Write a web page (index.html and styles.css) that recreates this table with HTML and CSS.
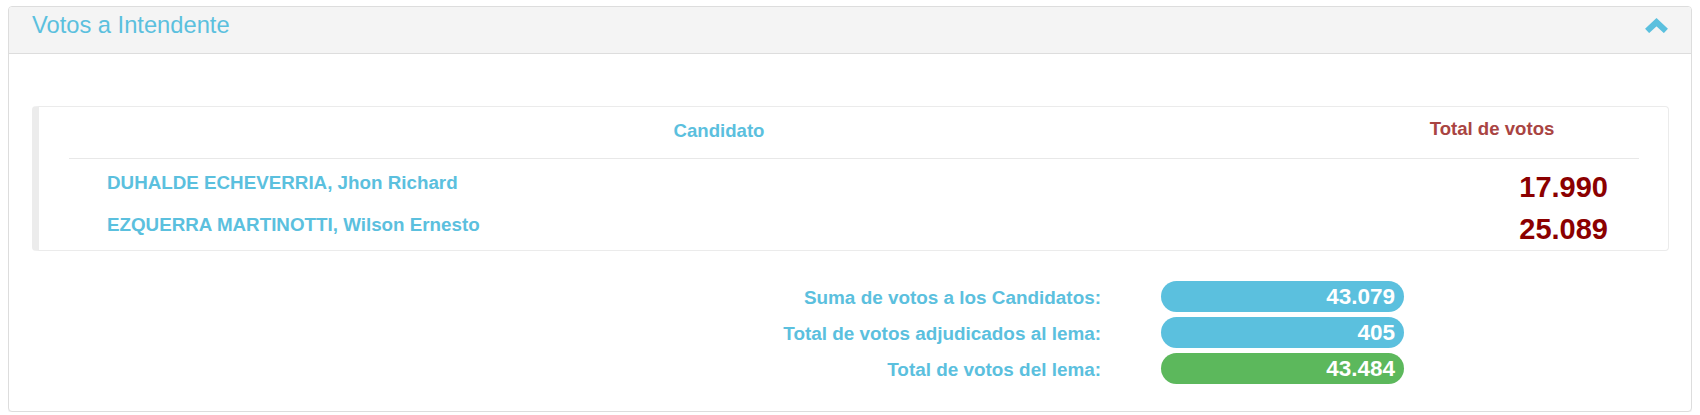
FILE: index.html
```html
<!DOCTYPE html>
<html lang="es">
<head>
<meta charset="utf-8">
<title>Votos a Intendente</title>
<link rel="stylesheet" href="styles.css">
</head>
<body>
<div class="panel">
  <div class="panel-heading">
    <h3 class="panel-title">Votos a Intendente</h3>
    <svg class="chevron" width="24" height="16" viewBox="0 0 24 16" aria-hidden="true">
      <polyline points="3.1,13.9 12.5,5.2 21.9,13.9" fill="none" stroke="#5bc0de" stroke-width="6" stroke-linecap="butt" stroke-linejoin="miter"/>
    </svg>
  </div>
  <div class="panel-body">
    <div class="callout">
      <div class="results">
        <div class="results-head">
          <div class="th th-name">Candidato</div>
          <div class="th th-votes">Total de votos</div>
        </div>
        <div class="results-body">
          <div class="row">
            <div class="name">DUHALDE ECHEVERRIA, Jhon Richard</div>
            <div class="votes">17.990</div>
          </div>
          <div class="row">
            <div class="name">EZQUERRA MARTINOTTI, Wilson Ernesto</div>
            <div class="votes">25.089</div>
          </div>
        </div>
      </div>
    </div>
    <div class="summary">
      <div class="label">Suma de votos a los Candidatos:</div>
      <div class="pill pill-info">43.079</div>
      <div class="label">Total de votos adjudicados al lema:</div>
      <div class="pill pill-info">405</div>
      <div class="label">Total de votos del lema:</div>
      <div class="pill pill-success">43.484</div>
    </div>
  </div>
</div>
</body>
</html>
```
FILE: styles.css
```css
* { box-sizing: border-box; }

body {
  margin: 6px 8px 0;
  font-family: "Liberation Sans", Arial, sans-serif;
  background: #fff;
}

.panel {
  border: 1px solid #dddddd;
  border-radius: 4px;
  background: #fff;
  box-shadow: 0 1px 1px rgba(0, 0, 0, 0.05);
}

.panel-heading {
  display: flex;
  justify-content: space-between;
  align-items: flex-start;
  padding: 6px 23px 15px 23px;
  background: #f4f4f4;
  border-bottom: 1px solid #dddddd;
  border-radius: 3px 3px 0 0;
}

.panel-title {
  margin: 0;
  font-size: 23.7px;
  line-height: 25px;
  font-weight: normal;
  color: #5bc0de;
}

.chevron {
  display: block;
  margin-top: 4px;
}

.panel-body {
  padding: 52px 22px 27px 23px;
}

.callout {
  border: 1px solid #ebebeb;
  border-left: 7px solid #ececec;
  border-radius: 4px;
}

.results {
  margin: 0 29px 0 30px;
}

.results-head {
  display: grid;
  grid-template-columns: 1300px 1fr;
  align-items: start;
  padding: 13px 0 16px;
  border-bottom: 1px solid #e8e8e8;
}

.th {
  font-size: 18.6px;
  font-weight: bold;
  line-height: 22px;
  text-align: center;
}

.th-name { color: #5bc0de; }

.th-votes {
  color: #a94442;
  line-height: 18px;
  padding-right: 24px;
}

.results-body {
  display: flex;
  flex-direction: column;
  gap: 10px;
  padding: 14px 0 3px;
}

.row {
  display: grid;
  grid-template-columns: 1300px 1fr;
  align-items: start;
  height: 32px;
}

.name {
  padding-left: 38px;
  font-size: 18.8px;
  font-weight: bold;
  line-height: 20px;
  color: #5bc0de;
}

.votes {
  padding-right: 31px;
  text-align: right;
  font-size: 29px;
  font-weight: bold;
  line-height: 29px;
  color: #8b0000;
}

.summary {
  display: grid;
  grid-template-columns: 1fr 243px;
  column-gap: 60px;
  row-gap: 5px;
  margin-top: 30px;
  padding-right: 265px;
}

.label {
  text-align: right;
  font-size: 18.9px;
  font-weight: bold;
  line-height: 29px;
  padding-top: 2px;
  color: #5bc0de;
}

.pill {
  height: 31px;
  border-radius: 16px;
  padding-right: 9px;
  text-align: right;
  font-size: 22.5px;
  font-weight: bold;
  line-height: 31px;
  color: #fff;
}

.pill-info { background: #5bc0de; }
.pill-success { background: #5cb85c; }
```
